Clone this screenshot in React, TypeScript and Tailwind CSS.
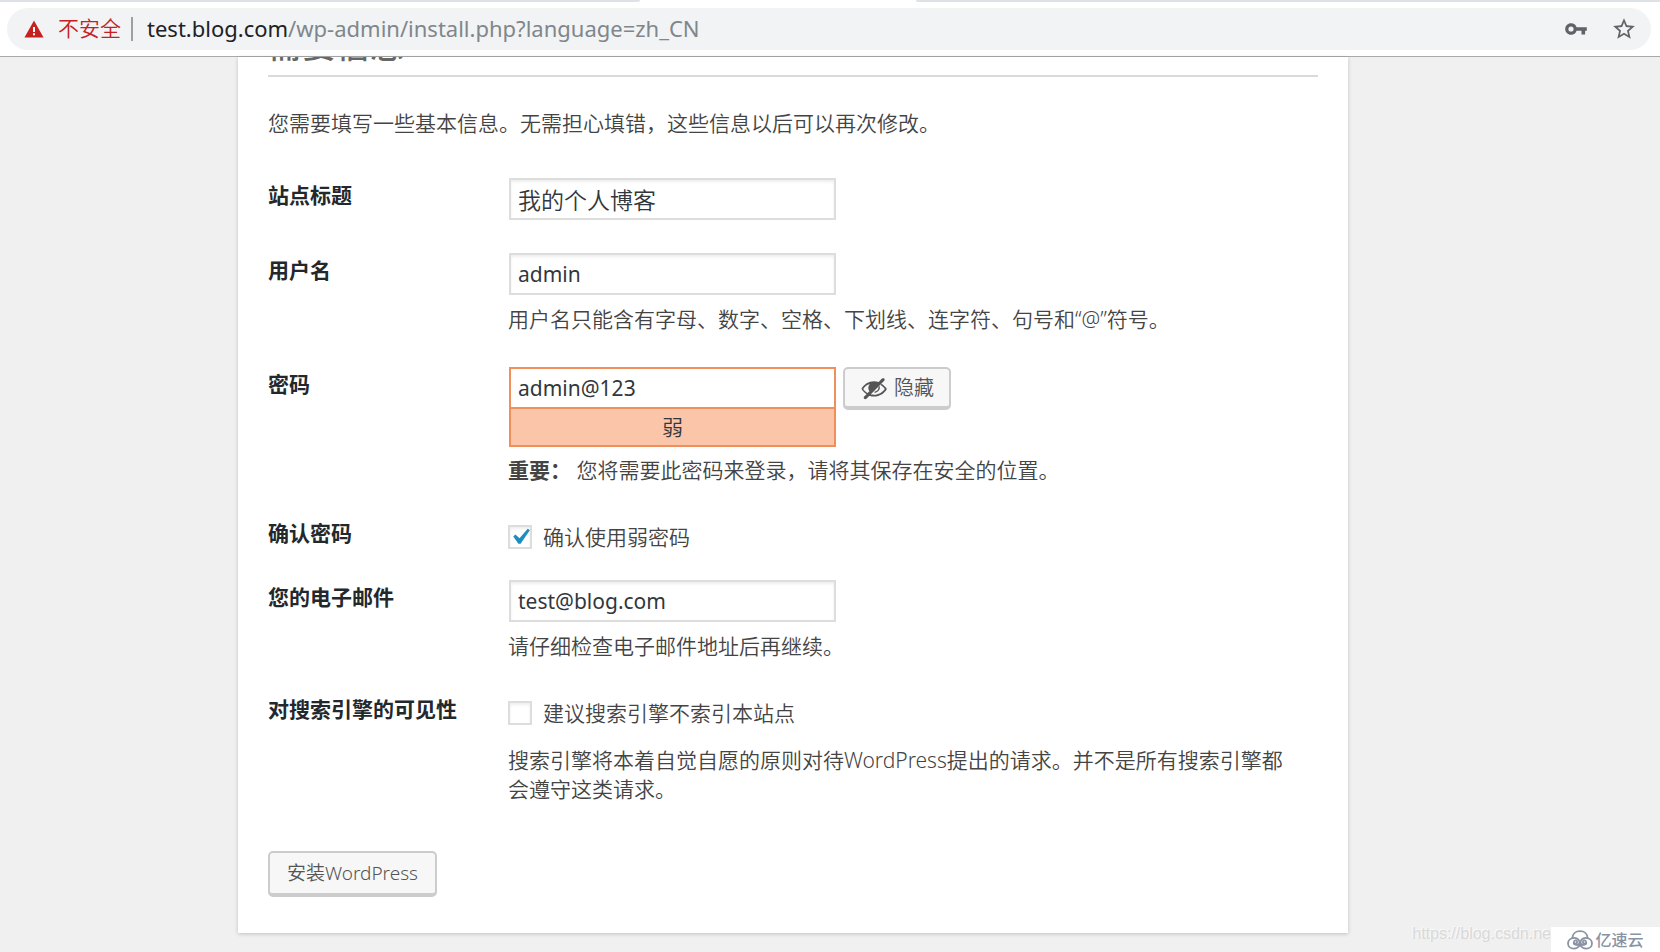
import React, { useState } from 'react';

const inputBase =
  'block ml-px w-[327px] h-[42px] border-2 bg-white px-[7px] text-[#32373c] outline-none';
const inputPlain = inputBase + ' border-[#ddd] shadow-[inset_0_2px_3px_rgba(0,0,0,0.07)]';
const buttonBase =
  'flex items-center justify-center border-2 border-b-4 border-[#ccc] rounded-[5px] bg-[#f7f7f7] text-[#555]';

type FieldProps = { label: string; htmlFor: string; pad?: string; children: React.ReactNode };

function Field({ label, htmlFor, pad = 'pb-4', children }: FieldProps) {
  return (
    <div className={'flex pt-[15px] ' + pad}>
      <label htmlFor={htmlFor} className="w-60 shrink-0 pt-0.5 font-bold text-[#23282d]">
        {label}
      </label>
      <div className="flex-1 min-w-0">{children}</div>
    </div>
  );
}

function CheckField({ id, label, checked, onChange }: { id: string; label: string; checked: boolean; onChange: () => void }) {
  return (
    <label htmlFor={id} className="flex items-center gap-[11px] pt-1.5">
      <span className="relative">
        <input
          id={id}
          type="checkbox"
          checked={checked}
          onChange={onChange}
          className="block appearance-none w-6 h-6 border-2 border-[#ddd] bg-white shadow-[inset_0_2px_3px_rgba(0,0,0,0.07)]"
        />
        {checked && (
          <svg viewBox="0 0 20 20" className="absolute -left-1 -top-1 w-8 h-8 pointer-events-none" fill="#1e8cbe">
            <path d="M14.83 4.89l1.34.94-5.81 8.38H9.02L5.78 9.67l1.34-1.25 2.57 2.4z" />
          </svg>
        )}
      </span>
      {label}
    </label>
  );
}

function AddressBar() {
  return (
    <header className="bg-white border-b border-[#a9a9a9]">
      {/* bottom edge of the tab strip, the gap is the active tab */}
      <div className="flex justify-between h-0.5">
        <div className="w-[640px] bg-[#dee1e6] rounded-br-lg" />
        <div className="w-[744px] bg-[#dee1e6] rounded-bl-lg" />
      </div>
      <div className="flex items-center h-[42px] my-1.5 ml-[7px] mr-[9px] pl-[17px] pr-3.5 rounded-full bg-[#f1f3f4]">
        <svg viewBox="0 0 20 18" className="w-5 h-[18px] mr-3.5" fill="#c5221f">
          <path d="M10 0.5L19.5 17.5H0.5z" />
          <path d="M9 7h2v5H9zM9 13.3h2v2H9z" fill="#fff" />
        </svg>
        <span className="text-[21px] text-[#c5221f]">不安全</span>
        <div className="w-0.5 h-6 ml-2.5 mr-3.5 bg-[#9aa0a6]" />
        <a href="#" className="flex-1 text-[22px] leading-7 pb-0.5 font-normal text-[#80868b]">
          <span className="text-[#202124]">test.blog.com</span>/wp-admin/install.php?language=zh_CN
        </a>
        <button type="button" aria-label="key" className="mr-[23px]">
          <svg viewBox="0 0 24 24" className="w-6 h-6" fill="#5f6368">
            <path d="M12.6 10.2A5.8 5.8 0 0 0 7 6.2C3.800 6.200 1.200 8.800 1.200 12S3.800 17.800 7 17.800a5.800 5.800 0 0 0 5.600-4H17.500v3.600h3.600v-3.600H22.800v-3.600zM7 14.600a2.600 2.600 0 1 1 0-5.200 2.600 2.600 0 0 1 0 5.200z" />
          </svg>
        </button>
        <button type="button" aria-label="star">
          <svg viewBox="0 0 24 24" className="w-[26px] h-[26px]" fill="#5f6368">
            <path d="M22 9.24l-7.19-.62L12 2 9.19 8.63 2 9.24l5.46 4.73L5.82 21 12 17.27 18.18 21l-1.63-7.03L22 9.24zM12 15.4l-3.76 2.27 1-4.28-3.32-2.88 4.38-.38L12 6.1l1.71 4.04 4.38.38-3.32 2.88 1 4.28L12 15.4z" />
          </svg>
        </button>
      </div>
    </header>
  );
}

export default function App() {
  const [title, setTitle] = useState('我的个人博客');
  const [user, setUser] = useState('admin');
  const [password, setPassword] = useState('admin@123');
  const [hidden, setHidden] = useState(false);
  const [weak, setWeak] = useState(true);
  const [email, setEmail] = useState('test@blog.com');
  const [noIndex, setNoIndex] = useState(false);

  return (
    <div className="relative min-h-screen bg-[#f0f0f0] overflow-hidden font-['Noto_Sans','Noto_Sans_CJK_SC',sans-serif] font-[350]">
      <AddressBar />
      <main className="flex justify-center pr-[74px] pb-[18px]">
        <form
          onSubmit={(e) => e.preventDefault()}
          className="w-full max-w-[1110px] px-[30px] pb-9 bg-white shadow-[0_1px_4px_rgba(0,0,0,0.2)] text-[21px] leading-[30px] text-[#444]"
        >
          {/* heading is scrolled under the address bar */}
          <h1 className="flex items-end h-5 pb-[13px] overflow-hidden border-b-2 border-[#dadada] text-[34px] leading-[34px] font-medium text-[#666]">
            需要信息
          </h1>
          <p className="pt-[31px] pb-[25px]">您需要填写一些基本信息。无需担心填错，这些信息以后可以再次修改。</p>

          <Field label="站点标题" htmlFor="title" pad="pb-[18px]">
            <input id="title" type="text" value={title} onChange={(e) => setTitle(e.target.value)} className={inputPlain + ' text-[23px]'} />
          </Field>
          <Field label="用户名" htmlFor="user" pad="pb-[18px]">
            <input id="user" type="text" value={user} onChange={(e) => setUser(e.target.value)} className={inputPlain + ' font-normal'} />
            <p className="pt-[9px]">用户名只能含有字母、数字、空格、下划线、连字符、句号和“@”符号。</p>
          </Field>
          <Field label="密码" htmlFor="password">
            <div className="flex items-start gap-[7px]">
              <div>
                <input
                  id="password"
                  type={hidden ? 'password' : 'text'}
                  value={password}
                  onChange={(e) => setPassword(e.target.value)}
                  className={inputBase + ' border-[#f18f5c] font-normal'}
                />
                <div className="h-10 ml-px -mt-0.5 border-2 border-[#f18f5c] bg-[#fbc5a9] text-center leading-9 text-[#32373c]">弱</div>
              </div>
              <button type="button" onClick={() => setHidden(!hidden)} className={buttonBase + ' gap-1.5 w-[108px] h-[43px] text-[20px]'}>
                <svg viewBox="0 0 20 20" className="w-7 h-7" fill="#555">
                  <path d="M17.3 3.3c-.4-.4-1.1-.4-1.6 0l-2.4 2.4c-1.1-.4-2.2-.6-3.3-.6-3.8.1-7.2 2.1-9 5.4.2.4.5.8.8 1.2.8 1.1 1.8 2 2.9 2.7L3 16.1c-.4.4-.5 1.1 0 1.6.4.4 1.1.5 1.6 0L17.3 4.9c.4-.5.4-1.2 0-1.6zM6.7 12.3l-1.3 1.3c-1.2-.7-2.3-1.7-3.1-2.9C3.5 9 5.1 7.8 7 7.2c-1.3 1.4-1.4 3.6-.3 5.1zM18.3 9.5c-.8-1-1.8-1.9-2.8-2.6l-.9.9c1.2.7 2.3 1.7 3.1 2.9-1.7 2.5-4.500 4.100-7.600 4.100-.8 0-1.700-.1-2.400-.3l-1 1c1.100.4 2.300.6 3.500.6 3.800-.1 7.200-2.100 9-5.400-.3-.4-.6-.8-.9-1.200z" />
                  <path d="M13.700 8.800c.2 2.200-1.300 3.800-3.300 4.300" fill="none" stroke="#555" />
                </svg>
                {hidden ? '显示' : '隐藏'}
              </button>
            </div>
            <p className="pt-2">
              <strong className="font-bold">重要：</strong> 您将需要此密码来登录，请将其保存在安全的位置。
            </p>
          </Field>
          <Field label="确认密码" htmlFor="weak" pad="pb-[13px]">
            <CheckField id="weak" label="确认使用弱密码" checked={weak} onChange={() => setWeak(!weak)} />
          </Field>
          <Field label="您的电子邮件" htmlFor="email">
            <input id="email" type="email" value={email} onChange={(e) => setEmail(e.target.value)} className={inputPlain + ' font-normal'} />
            <p className="pt-[9px]">请仔细检查电子邮件地址后再继续。</p>
          </Field>
          <Field label="对搜索引擎的可见性" htmlFor="noindex">
            <CheckField id="noindex" label="建议搜索引擎不索引本站点" checked={noIndex} onChange={() => setNoIndex(!noIndex)} />
            <p className="pt-[18px] pr-7 leading-[29px]">
              搜索引擎将本着自觉自愿的原则对待WordPress提出的请求。并不是所有搜索引擎都会遵守这类请求。
            </p>
          </Field>

          <button type="submit" className={buttonBase + ' mt-[31px] w-[169px] h-[46px] text-[19px]'}>
            安装WordPress
          </button>
        </form>
      </main>

      <div className="absolute right-0 bottom-0 flex items-end">
        <span className="pb-2 font-['Liberation_Sans',sans-serif] font-normal text-[16px] leading-5 text-[#d9d9d9] [text-shadow:-1px_-1px_0_#fafafa]">
          https://blog.csdn.ne
        </span>
        <div className="flex items-center justify-center gap-0.5 w-[109px] h-[25px] bg-white text-[16px] leading-5 font-medium text-[#8a93a3]">
          <svg viewBox="0 0 26 20" className="w-[26px] h-5" fill="none" stroke="#8a93a3" strokeWidth="1.8" strokeLinecap="round">
            <path d="M5.500 8C5.500 3.500 9 1.200 13 1.200S20.500 3.500 20.500 8" />
            <path d="M8.500 13.500a1.600 1.600 0 1 0-1.500-2c-1.200 3 3.500 5 5.200 2 1.200-2.500-1.500-5.800-5-5.700C3.500 8 1 10.500 1 13.300c0 3.200 2.500 5.400 5.700 5.400 3 0 4.800-1.500 6.300-3.700" />
            <path d="M17.500 13.500a1.600 1.600 0 1 1 1.500-2c1.200 3-3.500 5-5.200 2-1.200-2.500 1.500-5.800 5-5.700 3.700.2 6.200 2.700 6.200 5.500 0 3.200-2.500 5.400-5.700 5.400-3 0-4.800-1.500-6.300-3.700" />
          </svg>
          亿速云
        </div>
      </div>
    </div>
  );
}
